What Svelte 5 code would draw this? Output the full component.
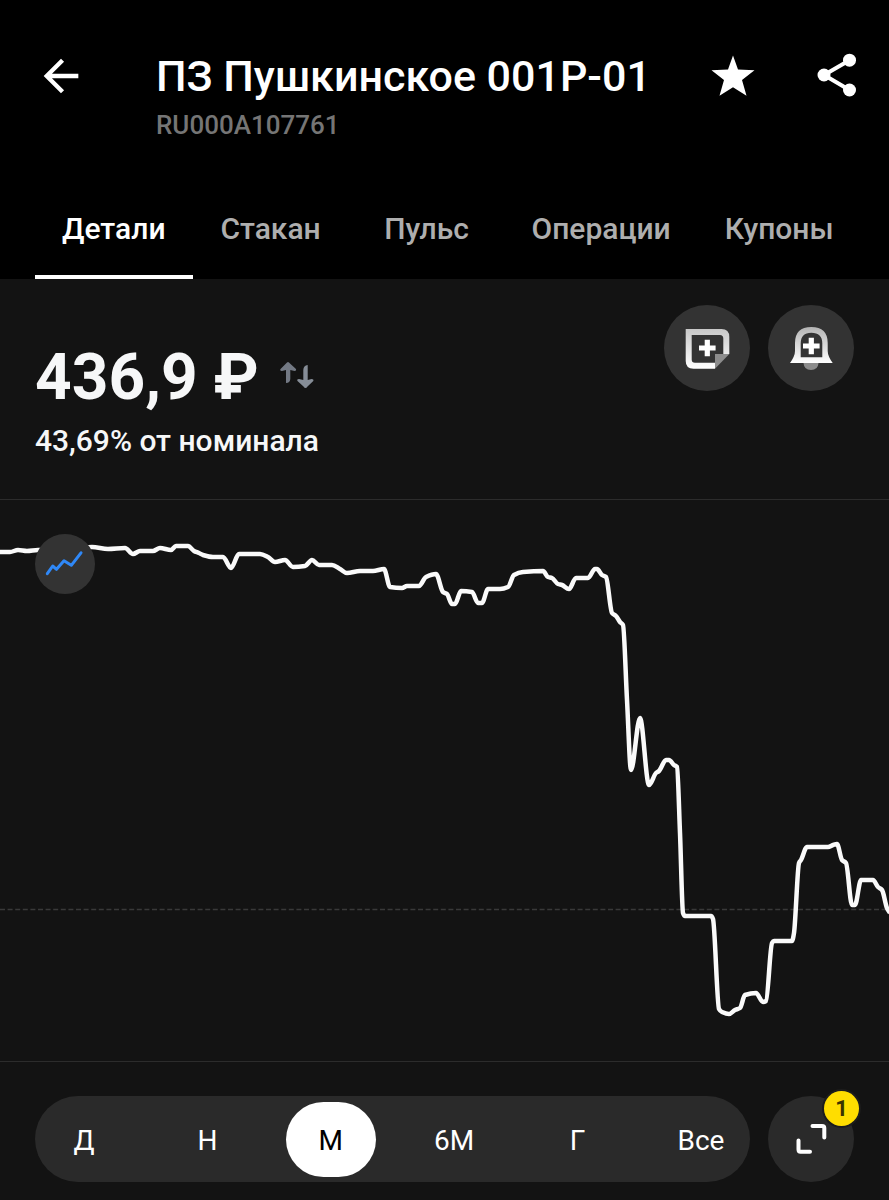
<script>
    const tabs = ['Детали', 'Стакан', 'Пульс', 'Операции', 'Купоны'];
    const periods = ['Д', 'Н', 'М', '6М', 'Г', 'Все'];

    let activeTab = $state('Детали');
    let period = $state('М');
    let favorite = $state(true);

    // chart points in viewBox units: [x, y]
    const points = [
        [0, 52], [10, 52], [18, 50], [27, 51], [38, 50], [60, 50], [92, 47], [108, 49], [125, 48],
        [133, 54], [140, 51], [153, 51], [160, 48], [171, 50], [176, 46], [188, 46], [194, 51],
        [199, 53], [203, 55], [213, 57], [223, 57], [231, 68], [239, 54], [260, 54], [268, 57],
        [275, 62], [285, 60], [293, 67], [305, 66], [312, 60], [319, 65], [332, 65], [340, 69],
        [347, 73], [360, 71], [373, 71], [384, 69], [390, 87], [402, 88], [407, 86], [419, 86],
        [426, 77], [436, 74], [443, 92], [447, 94], [452, 104], [455, 104], [461, 91], [472, 92],
        [478, 103], [482, 103], [488, 89], [500, 89], [508, 87], [514, 75], [523, 72], [543, 71],
        [548, 77], [552, 78], [558, 84], [562, 85], [569, 89], [576, 78], [588, 78], [595, 69],
        [597, 69], [602, 75], [606, 77], [612, 113], [616, 116], [620, 122], [623, 125],
        [627, 200], [631, 270], [640, 218], [649, 285], [656, 273], [659, 271], [666, 260],
        [669, 260], [674, 265], [677, 267], [680, 333], [683, 413], [685, 416], [711, 416],
        [713, 419], [719, 509], [722, 512], [729, 514], [735, 510], [740, 508], [745, 495],
        [756, 493], [763, 502], [766, 501], [772, 443], [774, 441], [792, 441], [794, 433],
        [799, 363], [801, 360], [807, 347], [828, 347], [833, 345], [837, 344], [842, 360],
        [846, 363], [852, 405], [855, 405], [861, 380], [873, 380], [878, 387], [882, 390],
        [887, 408], [890, 413]
    ];

    // monotone cubic interpolation, no overshoot on flat parts
    function smooth(pts) {
        const n = pts.length;
        const slope = [];
        for (let i = 0; i < n - 1; i++) {
            slope.push((pts[i + 1][1] - pts[i][1]) / (pts[i + 1][0] - pts[i][0]));
        }
        const m = pts.map((_, i) => {
            if (i === 0) return slope[0];
            if (i === n - 1) return slope[n - 2];
            const a = slope[i - 1];
            const b = slope[i];
            return a * b <= 0 ? 0 : (2 * a * b) / (a + b);
        });
        let d = `M${pts[0][0]} ${pts[0][1]}`;
        for (let i = 0; i < n - 1; i++) {
            const [x0, y0] = pts[i];
            const [x1, y1] = pts[i + 1];
            const h = (x1 - x0) / 3;
            d += `C${x0 + h} ${y0 + m[i] * h} ${x1 - h} ${y1 - m[i + 1] * h} ${x1} ${y1}`;
        }
        return d;
    }

    const line = smooth(points);
</script>

<svelte:head>
    <title>ПЗ Пушкинское 001P-01</title>
</svelte:head>

<div class="screen">
    <header>
        <div class="top">
            <button class="icon-btn" aria-label="Назад">
                <svg viewBox="0 0 24 24"><path d="M20 11H7.830l5.590-5.590L12 4l-8 8 8 8 1.410-1.410L7.830 13H20v-2z" /></svg>
            </button>
            <div class="heading">
                <h1>ПЗ Пушкинское 001P-01</h1>
                <p class="isin">RU000A107761</p>
            </div>
            <div class="actions">
                <button class="icon-btn" aria-label="В избранное" aria-pressed={favorite} onclick={() => (favorite = !favorite)}>
                    <svg viewBox="0 0 52 52">
                        <path
                            d="M26 5.5L31 19.5L47.5 20.3L35 30L39.5 45.8L26 37.2L12.5 45.8L17 30L4.5 20.3L21 19.5Z"
                            fill-opacity={favorite ? 1 : 0}
                            stroke="#fff"
                            stroke-width={favorite ? 0 : 3}
                        />
                    </svg>
                </button>
                <button class="icon-btn" aria-label="Поделиться">
                    <svg viewBox="0 0 52 52">
                        <path d="M38.500 10.200L13 25L38.500 40" fill="none" stroke="#fff" stroke-width="4" />
                        <circle cx="38.500" cy="10.200" r="6.500" />
                        <circle cx="13" cy="25" r="6.500" />
                        <circle cx="38.500" cy="40" r="6.500" />
                    </svg>
                </button>
            </div>
        </div>

        <nav class="tabs">
            {#each tabs as tab}
                <button class="tab" class:active={activeTab === tab} onclick={() => (activeTab = tab)}>{tab}</button>
            {/each}
        </nav>
    </header>

    <section class="summary">
        <div class="quote">
            <div class="price">
                <span>436,9 ₽</span>
                <svg class="swap" viewBox="0 0 34 32" aria-hidden="true">
                    <path d="M8 0Q9 0 10 1.500L16 7Q16.500 9 14.500 9L10.300 8V17Q10 21 6 21V8L2 9Q-0.500 9 0.500 7L6 1.500Q7 0 8 0Z" fill="#737984" />
                    <path d="M25.500 26Q24.500 26 23.500 24.500L17.500 19Q16.500 17 19 17L23.300 18V8Q23.500 3.500 27.700 3V18L31.500 17Q34 17 33.300 19L27.500 24.500Q26.500 26 25.500 26Z" fill="#868d97" />
                </svg>
            </div>
            <p class="nominal">43,69% от номинала</p>
        </div>
        <div class="tools">
            <button class="round" aria-label="Добавить заметку">
                <svg viewBox="0 0 86 86">
                    <defs>
                        <linearGradient id="note" x1="0" y1="0" x2="0" y2="1">
                            <stop offset="0" stop-color="#c8c8c8" />
                            <stop offset="1" stop-color="#fff" />
                        </linearGradient>
                    </defs>
                    <path
                        fill="url(#note)"
                        fill-rule="evenodd"
                        d="M21.700 24H57.500Q65.300 24 65.300 32V49H51V63.700H29.500Q21.700 63.700 21.700 56ZM27.700 30V54.500Q27.700 57.700 31 57.700H51V49H59.300V33.500Q59.300 30 56 30Z"
                    />
                    <path d="M51 49H65.300L51 63.700Z" fill="#8c8c8c" />
                    <path d="M43.300 34.700V51.300M35 43H51.600" stroke="#fff" stroke-width="5.200" />
                </svg>
            </button>
            <button class="round" aria-label="Добавить уведомление">
                <svg viewBox="0 0 86 86">
                    <defs>
                        <linearGradient id="bell" x1="0" y1="0" x2="0" y2="1">
                            <stop offset="0" stop-color="#b4b4b4" />
                            <stop offset="1" stop-color="#fff" />
                        </linearGradient>
                    </defs>
                    <path d="M35.500 58H50.500Q50 65 43 65Q36 65 35.500 58Z" fill="#8c8c8c" />
                    <path
                        fill="url(#bell)"
                        fill-rule="evenodd"
                        d="M27 38Q27 22 43.300 22Q59.700 22 59.700 38V46Q59.700 51 64.700 58H22Q27 51 27 46ZM32.700 38.500V52.300H54.300V38.500Q54.300 27.700 43.300 27.700Q32.700 27.700 32.700 38.500Z"
                    />
                    <path d="M43.300 32.700V49.300M35 41H51.600" stroke="#fff" stroke-width="5.200" />
                </svg>
            </button>
        </div>
    </section>

    <section class="chart">
        <svg class="plot" viewBox="0 0 889 561" role="img" aria-label="График цены за месяц">
            <line x1="0" y1="409.500" x2="889" y2="409.500" stroke="#393939" stroke-width="1.500" stroke-dasharray="5 2.600" />
            <path d={line} fill="none" stroke="#fafafa" stroke-width="4.500" stroke-linejoin="round" />
        </svg>
        <button class="chart-type" aria-label="Тип графика">
            <svg viewBox="0 0 60 60">
                <path d="M12.300 39.700L17.700 32L21.500 35.300L29 26.800L36.300 31.300L46 18.800" />
            </svg>
        </button>
    </section>

    <footer>
        <div class="periods">
            {#each periods as p}
                <button class="period" class:selected={period === p} onclick={() => (period = p)}>{p}</button>
            {/each}
        </div>
        <button class="round expand" aria-label="Развернуть график">
            <svg viewBox="0 0 86 86">
                <path d="M44.500 30H54Q56.300 30 56.300 32V41.500M30.500 44.500V53.500Q30.500 55.700 32.500 55.700H42" />
            </svg>
            <span class="badge">1</span>
        </button>
    </footer>
</div>

<style>
    :global(body) {
        margin: 0;
        background: #131313;
        font-family: Roboto, 'Noto Sans', sans-serif;
    }

    .screen { color: #fff; background: #131313; padding-bottom: 18px; }

    button {
        border: none;
        padding: 0;
        margin: 0;
        background: none;
        color: inherit;
        font-family: inherit;
        cursor: pointer;
    }

    svg { display: block; }
    h1, p { margin: 0; }

    header { background: #000; padding-top: 50px; }

    .top {
        display: flex;
        align-items: flex-start;
        padding: 0 26px 0 35px;
    }

    .icon-btn { width: 52px; height: 52px; flex: none; }
    .icon-btn svg { width: 100%; height: 100%; fill: #fff; }

    .heading { flex: 1; min-width: 0; margin-left: 69px; }
    h1 { font-size: 43px; line-height: 52px; font-weight: 500; white-space: nowrap; }
    .isin { margin-top: 8px; font-size: 26px; line-height: 30px; font-weight: 500; color: #757575; }
    .actions { display: flex; gap: 52px; }

    .tabs { display: flex; padding: 0 27px 0 35px; margin-top: 71px; }

    .tab {
        flex: none;
        min-width: 156px;
        padding: 0 27px 28px;
        border-bottom: 4px solid transparent;
        font-size: 30px;
        line-height: 36px;
        font-weight: 500;
        color: #aeaeae;
    }

    .tab.active { color: #fff; border-color: #fff; }

    .summary {
        display: flex;
        justify-content: space-between;
        align-items: flex-start;
        padding: 26px 35px 40px;
        border-bottom: 1px solid #2c2c2c;
    }

    .quote { padding-top: 35px; color: #f6f7f8; }

    .price {
        display: flex;
        align-items: center;
        gap: 21px;
        font-size: 64px;
        line-height: 76px;
        font-weight: 700;
    }

    .swap { width: 34px; height: 32px; }
    .nominal { margin-top: 7px; font-size: 30px; line-height: 36px; font-weight: 500; }

    .tools { display: flex; gap: 18px; }
    .round { flex: none; width: 86px; height: 86px; border-radius: 50%; background: #333; }
    .round svg { width: 100%; height: 100%; }

    .chart { position: relative; border-bottom: 1px solid #2c2c2c; }
    .plot { width: 100%; height: auto; }

    .chart-type {
        position: absolute;
        left: 35px;
        top: 34px;
        width: 60px;
        height: 60px;
        border-radius: 50%;
        background: #333;
    }

    .chart-type path {
        fill: none;
        stroke: #2f88f7;
        stroke-width: 3;
        stroke-linecap: round;
        stroke-linejoin: round;
    }

    footer { display: flex; gap: 18px; padding: 34px 35px 0; }

    .periods {
        flex: 1;
        display: flex;
        justify-content: space-between;
        align-items: center;
        height: 86px;
        padding: 0 4px;
        box-sizing: border-box;
        border-radius: 43px;
        background: #2a2a2a;
    }

    .period {
        width: 90px;
        height: 75px;
        padding-top: 3px;
        border-radius: 38px;
        font-size: 28px;
        line-height: 34px;
    }

    .period.selected { background: #fff; color: #000; }

    .expand { position: relative; background: #2a2a2a; }

    .expand path {
        fill: none;
        stroke: #fff;
        stroke-width: 4;
        stroke-linecap: round;
    }

    .badge {
        position: absolute;
        top: -5px;
        right: -5px;
        width: 35px;
        height: 35px;
        border-radius: 50%;
        background: #ffdd00;
        box-shadow: 0 0 0 2px #1c1c1c;
        color: #3a3200;
        font-size: 22px;
        line-height: 35px;
        font-weight: 700;
        text-align: center;
    }
</style>
